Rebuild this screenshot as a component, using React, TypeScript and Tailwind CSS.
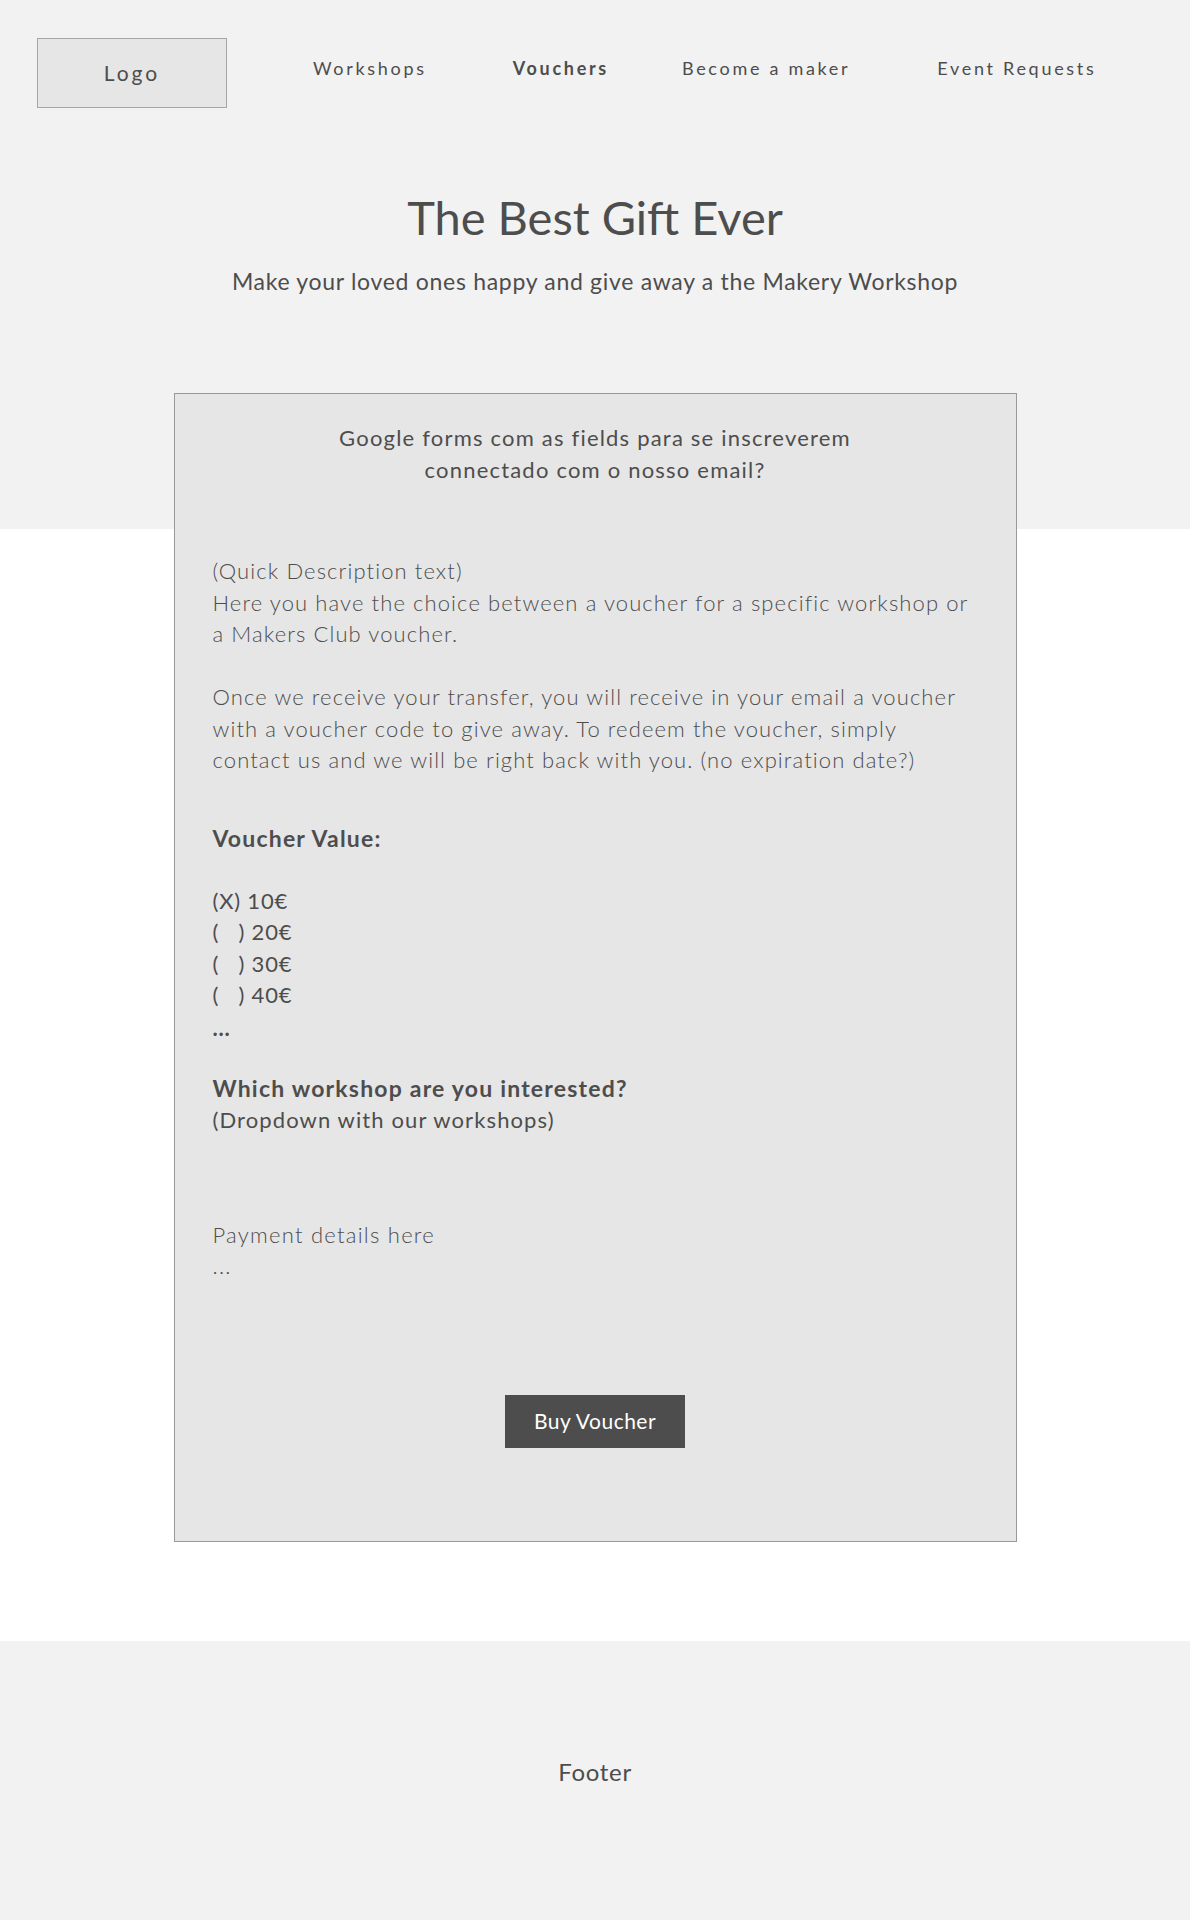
const NAV = [
  { label: "Workshops", bold: false, cls: "ml-[86px]" },
  { label: "Vouchers", bold: true, cls: "ml-[86px]" },
  { label: "Become a maker", bold: false, cls: "ml-[73px]" },
  { label: "Event Requests", bold: false, cls: "ml-[87px]" },
];

const VALUES = ["(X) 10€", "(   ) 20€", "(   ) 30€", "(   ) 40€"];

export default function App() {
  return (
    <div className="min-h-[1920px] bg-white font-['Lato','Liberation_Sans',sans-serif] text-[#4d4d4d]">
      {/* grey band behind header, card overlaps into the white area */}
      <div className="bg-[linear-gradient(to_bottom,#f2f2f2_529px,#ffffff_529px)] pb-[99px]">
        <header className="flex items-start pl-[37px] pt-[38px]">
          <div className="flex h-[70px] w-[190px] items-center justify-center border border-[#a6a6a6] bg-[#e6e6e6] text-[21px] tracking-[0.14em]">
            Logo
          </div>
          {NAV.map((item) => (
            <a
              key={item.label}
              href="#"
              className={`${item.cls} mt-[18px] text-[18px] leading-[24px] tracking-[0.15em] ${item.bold ? "font-bold" : "font-normal"}`}
            >
              {item.label}
            </a>
          ))}
        </header>

        <h1 className="mt-[83px] text-center text-[47px] leading-[53px] font-normal">The Best Gift Ever</h1>
        <p className="mt-[24px] text-center text-[23px] leading-[27px] tracking-[0.7px]">
          Make your loved ones happy and give away a the Makery Workshop
        </p>

        <section className="mx-auto mt-[98px] w-[843px] border border-[#999999] bg-[#e6e6e6] px-[38px] pt-[28px] pb-[93px]">
          <p className="text-center text-[22px] leading-[32px] tracking-[1.2px]">
            Google forms com as fields para se inscreverem
            <br />
            connectado com o nosso email?
          </p>

          <div className="mt-[69px] text-[22px] leading-[31.5px] tracking-[1.1px] font-light">
            <p>(Quick Description text)</p>
            <p>Here you have the choice between a voucher for a specific workshop or a Makers Club voucher.</p>
            <p className="mt-[31.5px]">
              Once we receive your transfer, you will receive in your email a voucher with a voucher code to give
              away. To redeem the voucher, simply contact us and we will be right back with you. (no expiration date?)
            </p>
          </div>

          <p className="mt-[46px] text-[23px] leading-[32px] tracking-[1.2px] font-bold">Voucher Value:</p>
          <ul className="mt-[31px] text-[22px] leading-[31.5px] tracking-[0.8px] whitespace-pre">
            {VALUES.map((v) => (
              <li key={v}>{v}</li>
            ))}
            <li className="leading-[34px] font-bold">...</li>
          </ul>

          <p className="mt-[28px] text-[23px] leading-[31px] tracking-[1.2px] font-bold">
            Which workshop are you interested?
          </p>
          <p className="text-[22px] leading-[31px] tracking-[1.1px]">(Dropdown with our workshops)</p>

          <p className="mt-[84px] text-[22px] leading-[31px] tracking-[1.25px] font-light">Payment details here</p>
          <p className="text-[22px] leading-[31px] tracking-[1.25px] font-light">...</p>

          <div className="mt-[114px] flex justify-center">
            <button className="h-[53px] w-[180px] bg-[#4d4d4d] text-[21px] tracking-[0.5px] text-white">
              Buy Voucher
            </button>
          </div>
        </section>
      </div>

      <footer className="flex h-[279px] items-center justify-center bg-[#f2f2f2] pb-[16px] text-[24px] tracking-[0.7px]">
        Footer
      </footer>
    </div>
  );
}
